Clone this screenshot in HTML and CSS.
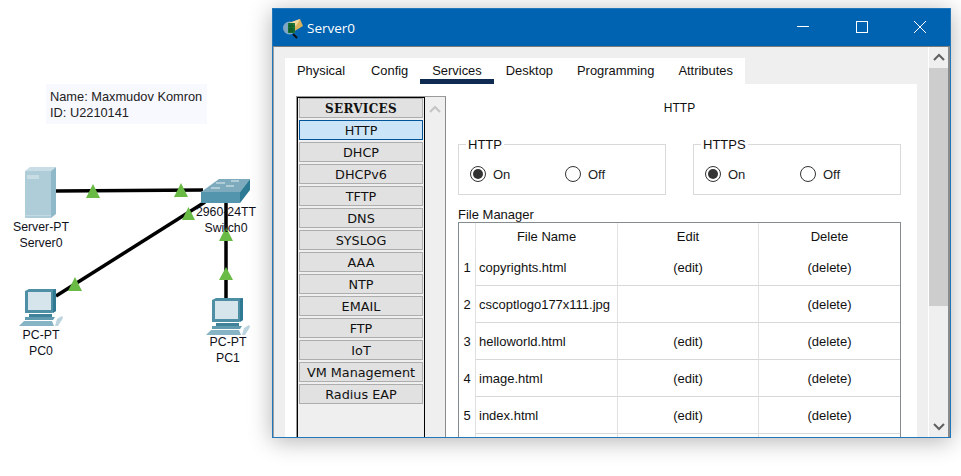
FILE: index.html
```html
<!DOCTYPE html>
<html>

<head>
    <title>Server0</title>
    <link rel="stylesheet" href="styles.css">
</head>
<body>
    <div class="note">Name: Maxmudov Komron<br>ID: U2210141</div>

    <svg class="topology" width="272" height="476" viewBox="0 0 272 476">
        <defs>
            <g id="pc">
                <polygon points="25,291 29,289 56,289 56,311 52,313 25,313" fill="#4f8fa5"/>
                <polygon points="53,290 56,289 56,311 53,313" fill="#2f7a92"/>
                <rect x="28" y="292" width="23" height="18" fill="#d6e4ec"/>
                <polygon points="29,314 52,314 52,317 29,317" fill="#3f8299"/>
                <polygon points="25,317 55,317 53,320 25,320" fill="#5f9aae"/>
                <polygon points="24,321 52,321 54,326 19,326" fill="#86b4c4"/>
                <polygon points="57,319 62,316 63,318 58,326 55,326" fill="#bcd4de"/>
            </g>
        </defs>

        <line x1="56" y1="191" x2="203" y2="190" class="cable"/>
        <line x1="56" y1="296" x2="205" y2="202" class="cable"/>
        <line x1="226" y1="200" x2="226" y2="300" class="cable"/>

        <!-- server -->
        <polygon points="25,171 30,167 56,167 51,171" fill="#c8dde5"/>
        <polygon points="51,171 56,167 56,214 51,218" fill="#8fb9c8"/>
        <rect x="25" y="171" width="26" height="47" fill="#aecdd9"/>
        <rect x="27" y="175" width="12" height="4" fill="#c9dde5"/>
        <rect x="25" y="215" width="26" height="1" fill="#c4dae2"/>

        <!-- switch -->
        <polygon points="201,192 219,179 250,179 240,192" fill="#7dabbd"/>
        <rect x="201" y="192" width="39" height="11" fill="#5395ad"/>
        <polygon points="240,192 250,179 250,190 240,203" fill="#2c7a94"/>
        <path d="M216 183h9M231 181h8M211 188h9M226 186h8" stroke="#e4eef2" stroke-width="1"/>

        <use href="#pc"/>
        <use href="#pc" x="187" y="9"/>

        <polygon points="93,184 100,198 86,198" class="link-up"/>
        <polygon points="181,183 188,197 174,197" class="link-up"/>
        <polygon points="188.500,207 195,220 182,220" class="link-up"/>
        <polygon points="75,277 82,291 68,291" class="link-up"/>
        <polygon points="226,227 233,241 219,241" class="link-up"/>
        <polygon points="226,267 233,280 219,280" class="link-up"/>
    </svg>

    <div class="device-label label-server">Server-PT<br>Server0</div>
    <div class="device-label label-switch">2960-24TT<br>Switch0</div>
    <div class="device-label label-pc0">PC-PT<br>PC0</div>
    <div class="device-label label-pc1">PC-PT<br>PC1</div>

    <div class="window">
        <div class="titlebar">
            <svg class="app-icon" width="20" height="22" viewBox="0 0 20 22">
                <circle cx="6.500" cy="11" r="6.500" fill="#7fa6c4"/>
                <polygon points="6,6 17,2 20,9 10,15" fill="#d8b25c"/>
                <polygon points="6,6 17,2 13,9" fill="#efd9a0"/>
                <rect x="5" y="6" width="7" height="10" fill="#1d7a3c"/>
                <path d="M7 6v10M9 6v10M5 9h7M5 12h7M5 14h7" stroke="#0c4a20" stroke-width=".7"/>
                <line x1="10" y1="17" x2="14" y2="21" stroke="#111" stroke-width="2"/>
            </svg>
            <span class="title-text">Server0</span>
            <div class="controls">
                <svg width="14" height="14" viewBox="0 0 14 14"><line x1="1" y1="6.500" x2="13" y2="6.500" stroke="#fff"/></svg>
                <svg width="14" height="14" viewBox="0 0 14 14"><rect x="1.500" y="1.500" width="11" height="11" fill="none" stroke="#fff"/></svg>
                <svg width="14" height="14" viewBox="0 0 14 14"><path d="M1 1L13 13M13 1L1 13" stroke="#fff" fill="none"/></svg>
            </div>
        </div>

        <div class="client">
            <div class="content">
                <div class="tabs">
                    <span class="tab">Physical</span>
                    <span class="tab">Config</span>
                    <span class="tab active">Services</span>
                    <span class="tab">Desktop</span>
                    <span class="tab">Programming</span>
                    <span class="tab">Attributes</span>
                </div>

                <div class="panel">
                    <div class="services">
                        <div class="service-list">
                            <div class="service heading">SERVICES</div>
                            <div class="service selected">HTTP</div>
                            <div class="service">DHCP</div>
                            <div class="service">DHCPv6</div>
                            <div class="service">TFTP</div>
                            <div class="service">DNS</div>
                            <div class="service">SYSLOG</div>
                            <div class="service">AAA</div>
                            <div class="service">NTP</div>
                            <div class="service">EMAIL</div>
                            <div class="service">FTP</div>
                            <div class="service">IoT</div>
                            <div class="service">VM Management</div>
                            <div class="service">Radius EAP</div>
                        </div>
                        <div class="list-scroll">
                            <svg width="12" height="8" viewBox="0 0 12 8"><path d="M1 7L6 2L11 7" fill="none" stroke="#c4c4c4" stroke-width="2"/></svg>
                        </div>
                    </div>

                    <div class="main">
                        <div class="main-title">HTTP</div>

                        <div class="protocols">
                            <fieldset class="protocol">
                                <legend>HTTP</legend>
                                <div class="option"><span class="radio checked"></span>On</div>
                                <div class="option"><span class="radio"></span>Off</div>
                            </fieldset>
                            <fieldset class="protocol">
                                <legend>HTTPS</legend>
                                <div class="option"><span class="radio checked"></span>On</div>
                                <div class="option"><span class="radio"></span>Off</div>
                            </fieldset>
                        </div>

                        <div class="manager-label">File Manager</div>
                        <table class="files">
                            <colgroup>
                                <col class="col-num"><col class="col-name"><col class="col-edit"><col class="col-delete">
                            </colgroup>
                            <tr class="head"><th></th><th>File Name</th><th>Edit</th><th>Delete</th></tr>
                            <tr><td class="num">1</td><td class="name">copyrights.html</td><td>(edit)</td><td>(delete)</td></tr>
                            <tr><td class="num">2</td><td class="name">cscoptlogo177x111.jpg</td><td></td><td>(delete)</td></tr>
                            <tr><td class="num">3</td><td class="name">helloworld.html</td><td>(edit)</td><td>(delete)</td></tr>
                            <tr><td class="num">4</td><td class="name">image.html</td><td>(edit)</td><td>(delete)</td></tr>
                            <tr><td class="num">5</td><td class="name">index.html</td><td>(edit)</td><td>(delete)</td></tr>
                            <tr><td class="num"></td><td></td><td></td><td></td></tr>
                        </table>
                    </div>
                </div>
            </div>

            <div class="scrollbar">
                <svg width="12" height="8" viewBox="0 0 12 8"><path d="M1 7L6 2L11 7" fill="none" stroke="#606060" stroke-width="2"/></svg>
                <div class="scroll-track"><div class="scroll-thumb"></div></div>
                <svg width="12" height="8" viewBox="0 0 12 8"><path d="M1 1L6 6L11 1" fill="none" stroke="#606060" stroke-width="2"/></svg>
            </div>
        </div>
    </div>
</body>
</html>
```

FILE: styles.css
```css
html, body {
    height: 100%;
}

body {
    font-family: "Liberation Sans", Arial, sans-serif;
    font-size: 13px;
    margin: 0;
    padding: 0;
    background-color: #ffffff;
    color: #111111;
    position: relative;
    overflow: hidden;
}

/* topology side */

.topology {
    position: absolute;
    left: 0;
    top: 0;
}

.cable {
    stroke: #000000;
    stroke-width: 3.5;
}

.link-up {
    fill: #6abb45;
}

.note {
    position: absolute;
    left: 46px;
    top: 84px;
    width: 161px;
    height: 40px;
    padding: 5px 0 0 4px;
    box-sizing: border-box;
    background-color: #f8f8ff;
    font-size: 12.800px;
    line-height: 16px;
    color: #222222;
}

.device-label {
    position: absolute;
    width: 80px;
    text-align: center;
    line-height: 16px;
    font-size: 12.300px;
    color: #10101a;
}

.label-server {
    left: 1px;
    top: 219px;
}

.label-switch {
    left: 186px;
    top: 204px;
}

.label-pc0 {
    left: 1px;
    top: 327px;
}

.label-pc1 {
    left: 188px;
    top: 334px;
}

/* window */

.window {
    position: absolute;
    left: 272px;
    top: 8px;
    width: 679px;
    height: 430px;
    box-sizing: border-box;
    border: 1px solid #2277bb;
    background-color: #efefef;
    box-shadow: 0 3px 22px rgba(0, 0, 0, 0.3);
    display: flex;
    flex-direction: column;
    overflow: hidden;
}

.titlebar {
    height: 37px;
    flex: none;
    background-color: #0063b1;
    color: #ffffff;
    display: flex;
    align-items: center;
    padding-left: 10px;
}

.app-icon {
    margin-right: 4px;
}

.title-text {
    font-family: "Open Sans", sans-serif;
    font-size: 13.500px;
}

.controls {
    margin-left: auto;
    margin-top: -2px;
    display: flex;
    gap: 44.500px;
    padding-right: 23px;
}

.client {
    flex: 1;
    min-height: 0;
    display: flex;
    border-top: 1px solid #7a7a7a;
    border-left: 1px solid #a0a0a0;
    border-right: 2px solid #8a8a8a;
}

.content {
    flex: 1;
    min-width: 0;
    padding: 11px 11px 0 11px;
    border-right: 1px solid #ffffff;
    display: flex;
    flex-direction: column;
}

.tabs {
    display: flex;
    align-self: flex-start;
    height: 26px;
    background-color: #ffffff;
    font-size: 12.900px;
}

.tab {
    padding: 5px 12px 0;
    box-sizing: border-box;
}

.tab:first-child {
    padding-right: 14px;
}

.tab.active {
    border-bottom: 5px solid #0f2b52;
}

.panel {
    flex: 1;
    min-height: 0;
    background-color: #ffffff;
    display: flex;
    padding-left: 11px;
}

.services {
    flex: none;
    width: 150px;
    margin-top: 12px;
    display: flex;
    background-color: #efefef;
    border-top: 1px solid #9a9a9a;
    border-left: 1px solid #9a9a9a;
    border-right: 1px solid #8a8a8a;
    box-sizing: border-box;
}

.service-list {
    width: 128px;
    box-sizing: border-box;
    border: 1px solid #000000;
    border-bottom: none;
    padding: 0 1px;
    display: flex;
    flex-direction: column;
    gap: 2px;
}

.service {
    height: 20px;
    box-sizing: border-box;
    flex: none;
    background-color: #e1e1e1;
    border: 1px solid #adadad;
    font-family: "DejaVu Sans", sans-serif;
    font-size: 12.800px;
    line-height: 19px;
    text-align: center;
}

.service.heading {
    font-family: "DejaVu Serif", serif;
    font-size: 12px;
    font-weight: bold;
    letter-spacing: 0.300px;
    line-height: 20px;
}

.service.selected {
    background-color: #cce4f7;
    border-color: #005499;
}

.list-scroll {
    flex: 1;
    text-align: center;
    padding-top: 4px;
}

.main {
    flex: 1;
    min-width: 0;
    padding: 0 16px 0 12px;
}

.main-title {
    text-align: center;
    padding-top: 17px;
    height: 53px;
    box-sizing: border-box;
    line-height: 15px;
    font-size: 12px;
}

.protocols {
    display: flex;
    justify-content: space-between;
    height: 58px;
}

.protocol {
    width: 208px;
    height: 58px;
    box-sizing: border-box;
    margin: 0;
    padding: 2px 0 0 11px;
    border: 1px solid #d9d9d9;
    display: flex;
    align-items: center;
}

.protocol legend {
    padding: 0 2px;
    margin-left: -4px;
    font-size: 13px;
    line-height: 15px;
}

.option {
    width: 95px;
    display: flex;
    align-items: center;
    gap: 7px;
    color: #222222;
}

.radio {
    width: 16px;
    height: 16px;
    box-sizing: border-box;
    border: 1px solid #333333;
    border-radius: 50%;
    background-color: #ffffff;
    display: flex;
    align-items: center;
    justify-content: center;
}

.radio.checked::after {
    content: "";
    width: 10px;
    height: 10px;
    border-radius: 50%;
    background-color: #333333;
}

.manager-label {
    margin-top: 12px;
    height: 15px;
    line-height: 16px;
}

.files {
    width: 443px;
    table-layout: fixed;
    border-collapse: separate;
    border-spacing: 0;
    border: 1px solid #848c92;
    border-bottom: none;
}

.col-num {
    width: 16px;
}

.col-name {
    width: 142px;
}

.col-edit {
    width: 141px;
}

.files th {
    height: 26px;
    padding: 0;
    font-weight: normal;
    border-left: 1px solid #e4e4e4;
}

.files th:first-child {
    border-left: none;
}

.files td {
    height: 37px;
    box-sizing: border-box;
    padding: 0;
    text-align: center;
    border-left: 1px solid #e0e0e0;
    border-bottom: 1px solid #d8d8d8;
}

.files td.num {
    border-left: none;
    border-bottom: none;
}

.files td.name {
    text-align: left;
    padding-left: 3px;
}

/* outer scrollbar */

.scrollbar {
    flex: none;
    width: 19px;
    display: flex;
    flex-direction: column;
    align-items: center;
    background-color: #efefef;
}

.scrollbar svg {
    flex: none;
    margin: 6px 0;
}

.scroll-track {
    flex: 1;
    align-self: stretch;
    margin-top: 1px;
}

.scroll-thumb {
    height: 238px;
    background-color: #cdcdcd;
}
```
